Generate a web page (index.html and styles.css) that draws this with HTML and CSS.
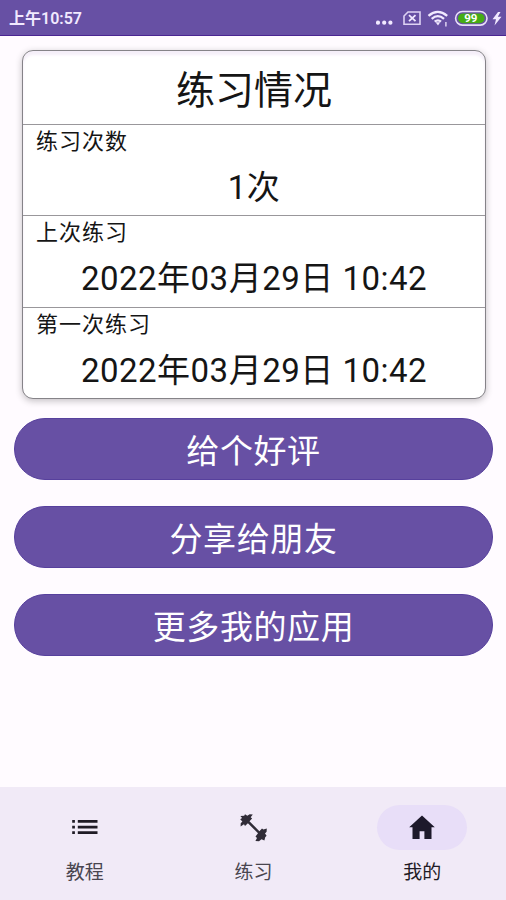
FILE: index.html
```html
<!DOCTYPE html>
<html lang="zh-CN">
<head>
<meta charset="utf-8">
<meta name="viewport" content="width=device-width">
<title>我的</title>
<link rel="stylesheet" href="styles.css">
</head>
<body>
<header class="status">
  <span class="time">上午10:57</span>
  <svg class="status-icons" width="130" height="35" viewBox="0 0 130 35">
    <g fill="#f1e9ff"><circle cx="2" cy="22.7" r="2.1"/><circle cx="8.2" cy="22.7" r="2.1"/><circle cx="14.4" cy="22.7" r="2.1"/></g>
    <path d="M32 12H44V24.2H28V16Z" fill="none" stroke="#ded2f3" stroke-width="1.6"/>
    <path d="M33 15.2L39.5 21.2M39.5 15.2L33 21.2" stroke="#f1e9ff" stroke-width="1.8"/>
    <g fill="none" stroke="#f1e9ff" stroke-width="2.3"><path d="M52.5 15.8Q61.7 8 71.2 15.8M55.7 18.9Q61.8 13.4 68 18.9M58.7 21.7Q62 19 65 21.7"/></g>
    <path d="M59.6 22.3H64.2L62 25.4Z" fill="#f1e9ff"/>
    <path d="M69.9 22V26.5" stroke="#ded2f3" stroke-width="1.5"/>
    <rect x="79.6" y="11.5" width="31.4" height="13.6" rx="6.8" fill="#6750a4" stroke="#e9defa" stroke-width="1.6"/>
    <rect x="82" y="13.4" width="26.6" height="9.8" rx="4.9" fill="#45ac14"/>
    <text class="battery" x="94.8" y="22.2" text-anchor="middle">99</text>
    <path d="M122 12L116.5 19.3H120L118.5 25.4L125.5 16.8H121.8L124.5 12Z" fill="#f1e9ff"/>
  </svg>
</header>
<main class="content">
  <section class="card">
    <h1 class="title">练习情况</h1>
    <div class="row"><div class="label">练习次数</div><div class="value">1次</div></div>
    <div class="row"><div class="label">上次练习</div><div class="value">2022年03月29日 10:42</div></div>
    <div class="row"><div class="label">第一次练习</div><div class="value">2022年03月29日 10:42</div></div>
  </section>
  <div class="actions">
    <button class="action">给个好评</button>
    <button class="action">分享给朋友</button>
    <button class="action">更多我的应用</button>
  </div>
</main>
<nav class="nav">
  <a class="tab">
    <span class="pill"><svg width="34" height="34" viewBox="0 0 34 34" fill="#1f1b25"><path d="M4.2 9.1h2.7v2.7H4.2zM4.2 14.7h2.7v2.7H4.2zM4.2 20.2h2.7v2.7H4.2zM9.8 9.1h19.7v2.7H9.8zM9.8 14.7h19.7v2.7H9.8zM9.8 20.2h19.7v2.7H9.8z"/></svg></span>
    <span>教程</span>
  </a>
  <a class="tab">
    <span class="pill"><svg width="34" height="34" viewBox="0 0 34 34" fill="#302c37"><path d="M3.4 5L7.2 4.7 8 3.3 10.3 4.8 12.7 3.2 15.8 3.4 13.7 6.2 15.1 7.4 12.5 10.2 22.4 20.2 25 17.6 26.4 18.6 29.8 17.4 29.6 20.8 28 22.4 29.6 24.7 28.2 26.2 27.4 29.5 24.5 28.2 22 30.2 18.4 30 20 26.9 18.5 25.6 21 22.3 10.9 12.2 8 15.1 7 13.3 3.6 15.4 3.7 12.2 5.4 10.6 3.2 8.3 5.1 7.1Z"/></svg></span>
    <span>练习</span>
  </a>
  <a class="tab active">
    <span class="pill"><svg width="34" height="34" viewBox="0 0 34 34" fill="#1d192b"><path d="M17 4.4L29.8 16.2H26.5V28H19.4V20.2H14.6V28H7.5V16.2H4.2Z"/></svg></span>
    <span>我的</span>
  </a>
</nav>
</body>
</html>
```
FILE: styles.css
```css
* { box-sizing: border-box; }
body {
  margin: 0;
  height: 900px;
  display: flex;
  flex-direction: column;
  overflow: hidden;
  background: #fffbff;
  color: #151515;
  font-family: Roboto, "Noto Sans CJK SC", sans-serif;
}
.status {
  height: 36px;
  flex: none;
  display: flex;
  justify-content: space-between;
  background: #6750a4;
  border-bottom: 1px solid #4b2592;
  color: #f1e9ff;
}
.time {
  padding-left: 9px;
  font-size: 16px;
  font-weight: 600;
  line-height: 38px;
}
.battery {
  fill: #fff;
  font-size: 11.5px;
  font-weight: 700;
}
.content { flex: 1; padding: 14px 13px 0 14px; }
.card {
  width: 464px;
  height: 348.5px;
  margin-left: 8px;
  background: #fff;
  border: 1.5px solid #858388;
  border-radius: 11px;
  box-shadow: 0 2px 7px rgba(0, 0, 0, .24), inset 0 4px 3px #f5eff9;
}
.title {
  height: 73px;
  margin: 0;
  text-align: center;
  font-size: 39px;
  font-weight: 400;
  line-height: 80px;
}
.row {
  height: 91.4px;
  border-top: 1.5px solid #99979b;
}
.label {
  height: 33px;
  padding-left: 13px;
  font-size: 22px;
  line-height: 33px;
  letter-spacing: 1px;
}
.value {
  text-align: center;
  font-size: 33px;
  line-height: 59px;
  letter-spacing: .5px;
}
.actions {
  display: flex;
  flex-direction: column;
  gap: 26px;
  margin-top: 19.5px;
}
.action {
  height: 62px;
  padding: 5px 0 0;
  border: 1px solid #57409d;
  border-radius: 31px;
  background: #6750a4;
  color: #fff;
  font: 400 33px/55px Roboto, "Noto Sans CJK SC", sans-serif;
  letter-spacing: .6px;
}
.nav {
  height: 113px;
  flex: none;
  display: flex;
  background: #f1eaf7;
}
.tab {
  flex: 1;
  display: flex;
  flex-direction: column;
  align-items: center;
  gap: 9px;
  padding: 18px 0 0 1px;
  color: #49454f;
  font-size: 19px;
  line-height: 28px;
}
.pill {
  width: 90px;
  height: 45px;
  display: flex;
  align-items: center;
  justify-content: center;
  border-radius: 23px;
}
.active { color: #1f1b25; }
.active .pill { background: #e8def8; }
```
